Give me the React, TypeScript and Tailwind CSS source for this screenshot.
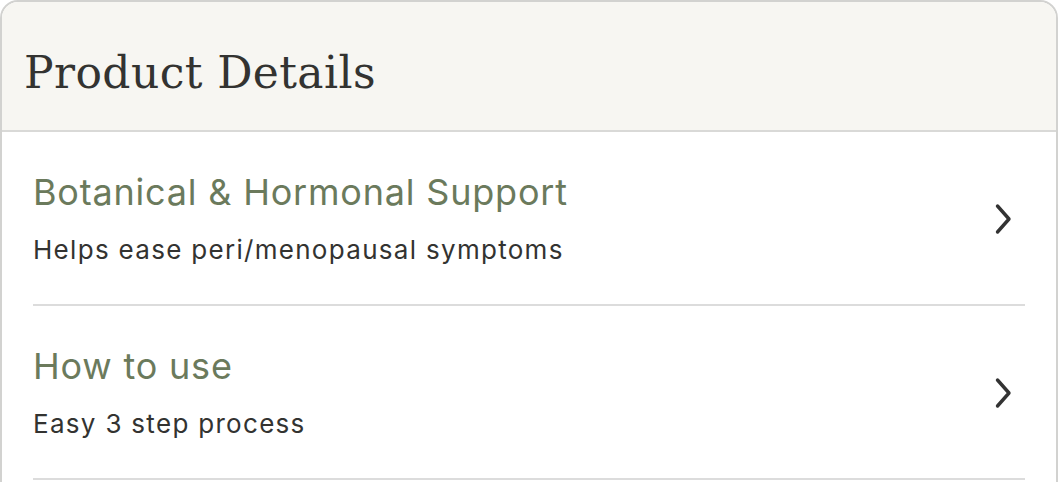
import React from "react";

function Chevron() {
  return (
    <svg width="22" height="32" viewBox="0 0 22 32" fill="none" aria-hidden="true">
      <path d="M4.5 3 L16 16 L4.5 29" stroke="#333333" strokeWidth="3.4" strokeLinecap="round" strokeLinejoin="round" />
    </svg>
  );
}

const items = [
  { title: "Botanical & Hormonal Support", sub: "Helps ease peri/menopausal symptoms" },
  { title: "How to use", sub: "Easy 3 step process" },
];

export default function App() {
  return (
    <div className="w-[1058px] h-[482px] overflow-hidden bg-white">
      <div className="w-[1058px] h-[600px] rounded-t-[18px] border-2 border-[#d2d2d0] overflow-hidden bg-white">
        <div className="h-[130px] bg-[#f7f6f2] border-b-2 border-[#d9d9d7] pl-[22px] pt-[49px]">
          <h1 className="text-[44px] leading-[44px] text-[#333331] tracking-[0.4px]" style={{ fontFamily: '"DejaVu Serif", serif' }}>
            Product Details
          </h1>
        </div>
        <div className="px-[31px]" style={{ fontFamily: 'Inter, "Noto Sans", sans-serif' }}>
          {items.map((it) => (
            <div key={it.title} className="h-[174px] border-b-2 border-[#dcdcdc] flex items-center justify-between">
              <div className="flex flex-col self-start pt-[40px]">
                <div className="text-[36px] leading-[40px] text-[#6b7a5c] tracking-[0.8px]">{it.title}</div>
                <div className="text-[26px] leading-[30px] text-[#333331] mt-[23px] tracking-[1.3px]">{it.sub}</div>
              </div>
              <div className="mr-[10px] mt-[2px]">
                <Chevron />
              </div>
            </div>
          ))}
        </div>
      </div>
    </div>
  );
}
